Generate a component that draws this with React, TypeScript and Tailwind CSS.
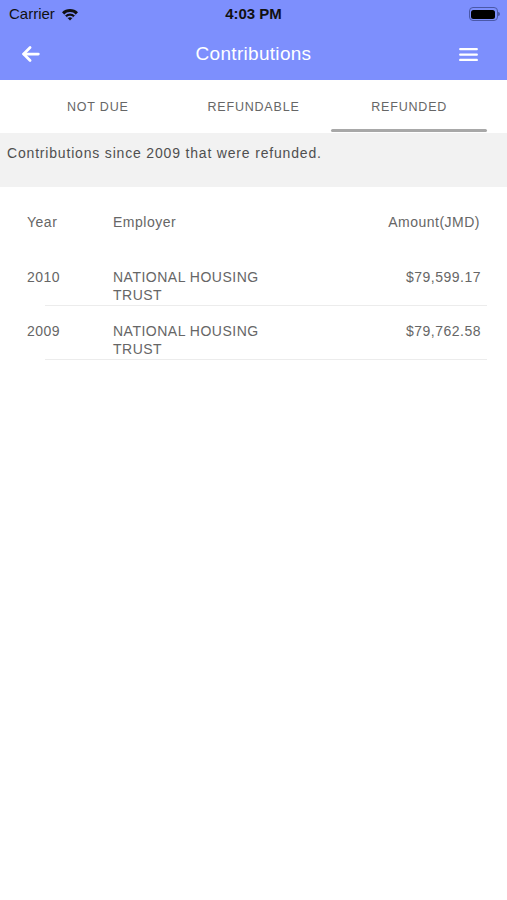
import React from "react";

const font = { fontFamily: "'Liberation Sans', Arial, sans-serif" };

export default function App() {
  return (
    <div className="w-[507px] h-[900px] bg-white" style={font}>
      <div className="bg-[#7d8ffd] h-[80px] flex flex-col">
        <div className="h-[28px] flex items-center justify-between px-[9px] text-[#111] text-[15px]">
          <div className="flex items-center gap-[6px] w-[120px]">
            <span>Carrier</span>
            <svg width="18" height="13" viewBox="0 0 18 13">
              <path d="M9 12.5 L1 4.2 A11.5 11.5 0 0 1 17 4.2 Z" fill="#111" />
              <path d="M3.6 6.9 A8 8 0 0 1 14.4 6.9" stroke="#7d8ffd" strokeWidth="1.4" fill="none" />
              <path d="M6.2 9.6 A4.3 4.3 0 0 1 11.8 9.6" stroke="#7d8ffd" strokeWidth="1.4" fill="none" />
            </svg>
          </div>
          <span className="font-bold">4:03 PM</span>
          <div className="w-[120px] flex justify-end">
            <div className="w-[29px] h-[14px] rounded-[4px] border border-[#4a58a8] p-[1.5px] flex items-center relative">
              <div className="w-full h-full bg-black rounded-[2.5px]" />
              <div className="absolute right-[-3px] top-[4px] w-[1.5px] h-[4px] bg-[#4a58a8] rounded-r" />
            </div>
          </div>
        </div>
        <div className="flex-1 flex items-center justify-between pl-[20px] pr-[29px]">
          <svg width="22" height="22" viewBox="0 0 24 24" fill="none" stroke="white" strokeWidth="3" strokeLinecap="round" strokeLinejoin="round">
            <path d="M20 12H4" />
            <path d="M11 5l-7 7 7 7" />
          </svg>
          <span className="text-white text-[19px] tracking-[0.3px] ml-[6px]">Contributions</span>
          <svg width="19" height="15" viewBox="0 0 20 16" fill="white">
            <rect x="0" y="1" width="20" height="2.4" rx="1" />
            <rect x="0" y="6.8" width="20" height="2.4" rx="1" />
            <rect x="0" y="12.6" width="20" height="2.4" rx="1" />
          </svg>
        </div>
      </div>
      <div className="h-[53px] flex text-[12.5px] tracking-[0.8px] text-[#666] px-[20px]">
        <div className="flex-1 flex items-center justify-center pt-[1px]">NOT DUE</div>
        <div className="flex-1 flex items-center justify-center pt-[1px]">REFUNDABLE</div>
        <div className="flex-1 flex flex-col">
          <div className="flex-1 flex items-center justify-center pt-[5px]">REFUNDED</div>
          <div className="h-[3px] bg-[#a8a8a8] rounded-full mb-[1px]" />
        </div>
      </div>
      <div className="bg-[#f2f2f2] h-[54px] px-[7px] pt-[10px] text-[14px] tracking-[0.82px] text-[#4f4f4f]">
        Contributions since 2009 that were refunded.
      </div>
      <div className="pt-[25px] text-[14px] tracking-[0.5px] text-[#666]">
        <div className="flex px-[27px] h-[20px] items-center">
          <div className="w-[86px]">Year</div>
          <div className="flex-1">Employer</div>
          <div className="text-right">Amount(JMD)</div>
        </div>
        <div className="h-[20px]" />
        {[
          { y: "2010", a: "$79,599.17" },
          { y: "2009", a: "$79,762.58" },
        ].map((r) => (
          <div key={r.y} className="ml-[45px] mr-[20px] border-b border-[#ececec] pt-[16px] pb-[1px]">
            <div className="flex -ml-[18px] mr-[6px] leading-[18px]">
              <div className="w-[86px]">{r.y}</div>
              <div className="flex-1">
                NATIONAL HOUSING<br />TRUST
              </div>
              <div className="text-right">{r.a}</div>
            </div>
          </div>
        ))}
      </div>
    </div>
  );
}
